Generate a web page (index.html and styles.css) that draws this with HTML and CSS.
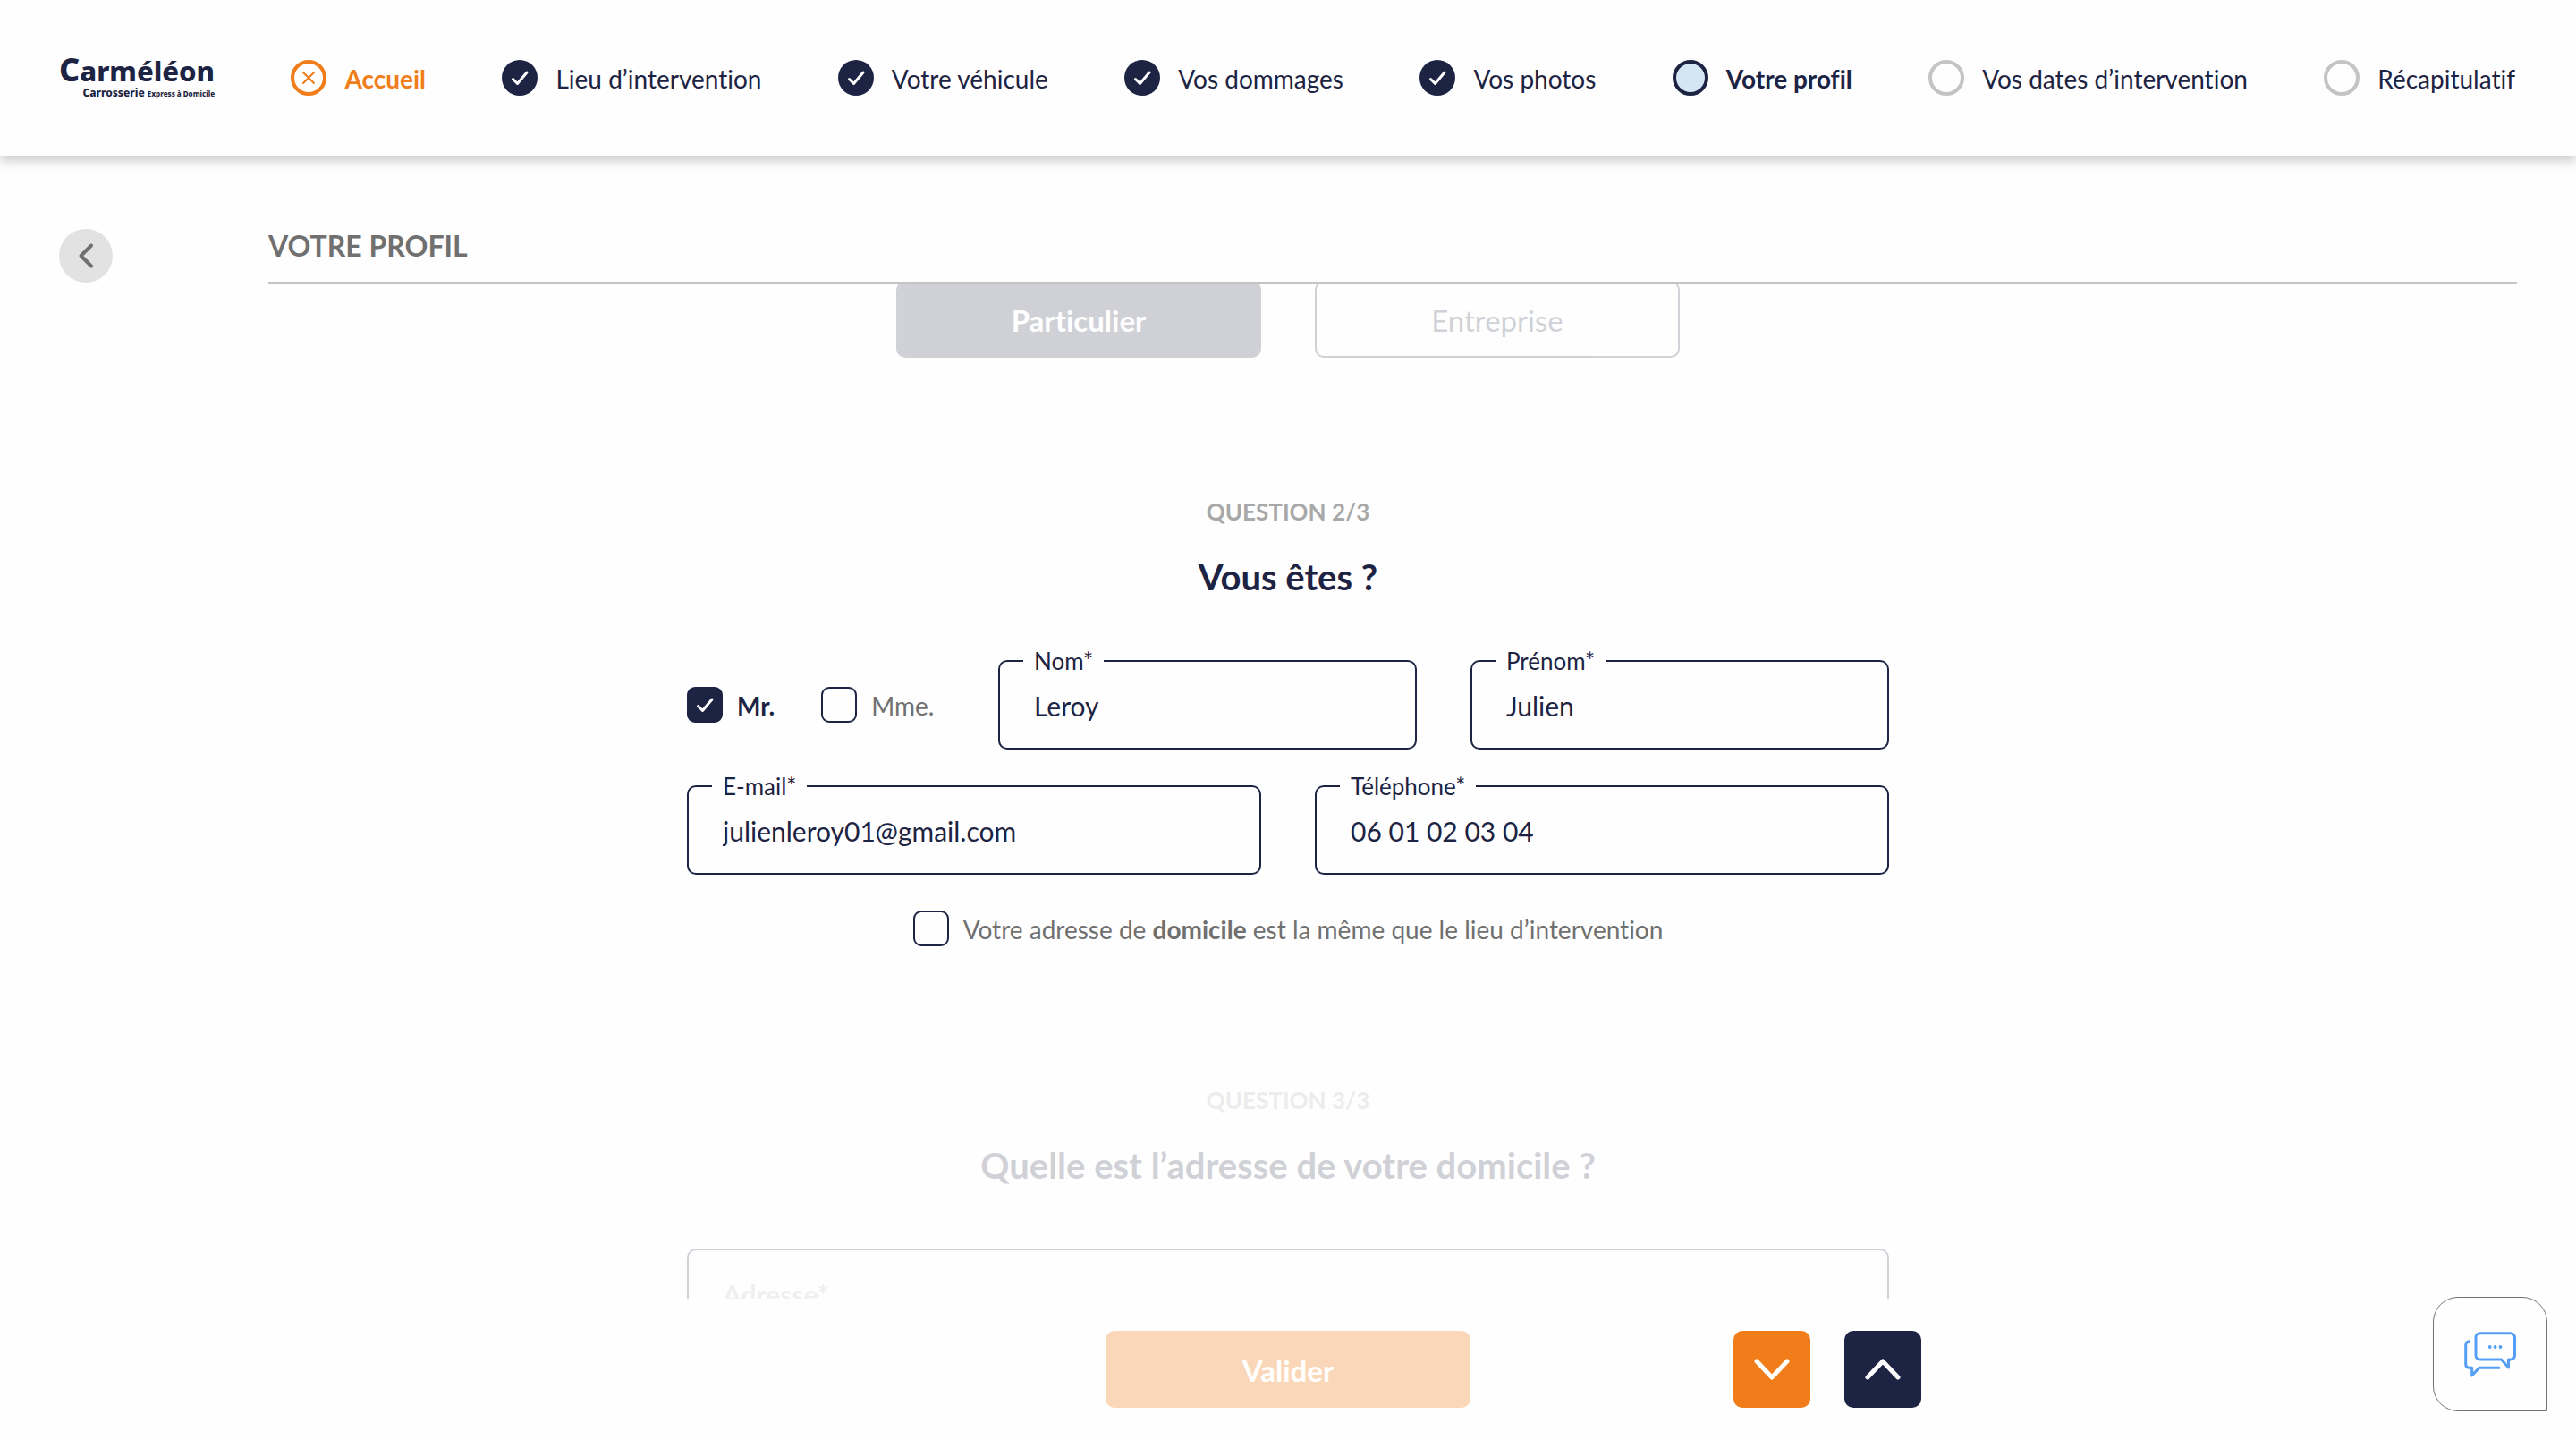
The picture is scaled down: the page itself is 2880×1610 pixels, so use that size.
FILE: index.html
```html
<!DOCTYPE html>
<html lang="fr">
<head>
<meta charset="utf-8">
<meta name="viewport" content="width=device-width, initial-scale=1">
<title>Carméléon – Votre profil</title>
<link rel="stylesheet" href="styles.css">
</head>
<body>
<header class="topbar">
  <div class="logo">
    <span class="logo-name"><span class="logo-initial">C</span>arméléon</span>
    <span class="logo-tagline">Carrosserie <small class="logo-small">Express à Domicile</small></span>
  </div>
  <a class="step step-home" href="#">
    <svg class="step-icon" viewBox="0 0 40 40"><circle cx="20" cy="20" r="18" fill="none" stroke="currentColor" stroke-width="4"/><path d="M14 14l12 12M26 14l-12 12" fill="none" stroke="currentColor" stroke-width="2" stroke-linecap="round"/></svg>
    <span class="step-label">Accueil</span>
  </a>
  <a class="step" href="#">
    <svg class="step-icon" viewBox="0 0 40 40"><circle cx="20" cy="20" r="20" fill="currentColor"/><path class="tick" d="M12.500 21.500l5 5L28 14"/></svg>
    <span class="step-label">Lieu d’intervention</span>
  </a>
  <a class="step" href="#">
    <svg class="step-icon" viewBox="0 0 40 40"><circle cx="20" cy="20" r="20" fill="currentColor"/><path class="tick" d="M12.500 21.500l5 5L28 14"/></svg>
    <span class="step-label">Votre véhicule</span>
  </a>
  <a class="step" href="#">
    <svg class="step-icon" viewBox="0 0 40 40"><circle cx="20" cy="20" r="20" fill="currentColor"/><path class="tick" d="M12.500 21.500l5 5L28 14"/></svg>
    <span class="step-label">Vos dommages</span>
  </a>
  <a class="step" href="#">
    <svg class="step-icon" viewBox="0 0 40 40"><circle cx="20" cy="20" r="20" fill="currentColor"/><path class="tick" d="M12.500 21.500l5 5L28 14"/></svg>
    <span class="step-label">Vos photos</span>
  </a>
  <a class="step step-current" href="#" aria-current="step">
    <svg class="step-icon" viewBox="0 0 40 40"><circle cx="20" cy="20" r="18" fill="#d4e6f4" stroke="currentColor" stroke-width="4"/></svg>
    <span class="step-label">Votre profil</span>
  </a>
  <a class="step" href="#">
    <svg class="step-icon" viewBox="0 0 40 40"><circle cx="20" cy="20" r="18" fill="none" stroke="#c4c4c4" stroke-width="4"/></svg>
    <span class="step-label">Vos dates d’intervention</span>
  </a>
  <a class="step" href="#">
    <svg class="step-icon" viewBox="0 0 40 40"><circle cx="20" cy="20" r="18" fill="none" stroke="#c4c4c4" stroke-width="4"/></svg>
    <span class="step-label">Récapitulatif</span>
  </a>
</header>

<div class="page-head">
  <button class="back" type="button" aria-label="Retour">
    <svg viewBox="0 0 60 60"><path d="M36 18.500L24.500 30 36 41.500" fill="none" stroke="currentColor" stroke-width="4" stroke-linecap="round" stroke-linejoin="round"/></svg>
  </button>
  <h1 class="page-title">VOTRE PROFIL</h1>
</div>

<main class="questions">
  <div class="choices faded">
    <button class="btn btn-dark" type="button">Particulier</button>
    <button class="btn btn-outline" type="button">Entreprise</button>
  </div>

  <section class="question">
    <p class="eyebrow">QUESTION 2/3</p>
    <h2 class="question-title">Vous êtes ?</h2>
    <form class="form">
      <div class="row row-name">
        <div class="civility">
          <label class="check"><span class="box"><input type="checkbox" checked><svg viewBox="0 0 40 40"><path class="tick" d="M12.500 21.500l5 5L28 14"/></svg></span><span class="check-label">Mr.</span></label>
          <label class="check"><span class="box"><input type="checkbox"><svg viewBox="0 0 40 40"><path class="tick" d="M12.500 21.500l5 5L28 14"/></svg></span><span class="check-label">Mme.</span></label>
        </div>
        <div class="field"><input id="nom" type="text" value="Leroy"><label for="nom">Nom*</label></div>
        <div class="field"><input id="prenom" type="text" value="Julien"><label for="prenom">Prénom*</label></div>
      </div>
      <div class="row row-contact">
        <div class="field"><input id="email" type="email" value="julienleroy01@gmail.com"><label for="email">E-mail*</label></div>
        <div class="field"><input id="tel" type="tel" value="06 01 02 03 04"><label for="tel">Téléphone*</label></div>
      </div>
      <label class="check same-address"><span class="box"><input type="checkbox"><svg viewBox="0 0 40 40"><path class="tick" d="M12.500 21.500l5 5L28 14"/></svg></span><span class="check-label">Votre adresse de <strong>domicile</strong> est la même que le lieu d’intervention</span></label>
    </form>
  </section>

  <section class="question faded">
    <p class="eyebrow">QUESTION 3/3</p>
    <h2 class="question-title">Quelle est l’adresse de votre domicile ?</h2>
    <form class="form">
      <div class="field"><input type="text" placeholder="Adresse*" aria-label="Adresse"></div>
    </form>
  </section>
</main>

<footer class="actions">
  <button class="btn btn-submit" type="button">Valider</button>
  <div class="arrows">
    <button class="arrow arrow-down" type="button" aria-label="Question suivante"><svg viewBox="0 0 86 86"><path d="M26 34l17 18 17-18"/></svg></button>
    <button class="arrow arrow-up" type="button" aria-label="Question précédente"><svg viewBox="0 0 86 86"><path d="M26 52l17-18 17 18"/></svg></button>
  </div>
</footer>

<button class="chat" type="button" aria-label="Discuter avec nous">
  <svg viewBox="0 0 58 51" fill="none" stroke="#559ff5" stroke-width="3" stroke-linecap="round" stroke-linejoin="round">
    <path d="M17.500 1.700H52a4.500 4.500 0 0 1 4.500 4.500V26.500A4.500 4.500 0 0 1 52 31H49.500V40L41.500 31H17.500A4.500 4.500 0 0 1 13 26.500V6.200A4.500 4.500 0 0 1 17.500 1.700z"/>
    <path d="M5.500 10.700C3 11 1.700 12.500 1.700 15V36C1.700 38.800 3.200 40.300 6 40.300H8.700V49L16.700 40.300H39"/>
    <g fill="#559ff5" stroke="none"><circle cx="28.700" cy="17" r="1.900"/><circle cx="34.600" cy="17" r="1.900"/><circle cx="40.500" cy="17" r="1.900"/></g>
  </svg>
</button>
</body>
</html>
```
FILE: styles.css
```css
:root {
  --navy: #1d2342;
  --orange: #f07d19;
  --grey: #707070;
  --line: #c4c4c4;
  --page: #fefefe;
}

* { box-sizing: border-box; }

body {
  margin: 0;
  height: 100vh;
  display: flex;
  flex-direction: column;
  overflow: hidden;
  background: var(--page);
  color: var(--navy);
  font: 28px/34px Lato, "Open Sans", sans-serif;
  font-variant-ligatures: none;
}

h1, h2, p { margin: 0; }
button, input { font: inherit; color: inherit; font-variant-ligatures: none; }
button { padding: 0; border: 0; cursor: pointer; }
svg { display: block; }

.tick {
  fill: none;
  stroke: #fff;
  stroke-width: 3;
  stroke-linecap: round;
  stroke-linejoin: round;
}

/* Top bar */
.topbar {
  flex: none;
  position: relative;
  z-index: 2;
  height: 174px;
  padding: 0 68px 0 66px;
  display: flex;
  align-items: center;
  justify-content: space-between;
  background: var(--page);
  box-shadow: 0 6px 12px rgba(0, 0, 0, 0.2);
}

.logo {
  display: flex;
  flex-direction: column;
  align-items: flex-end;
  font-family: "Noto Sans", sans-serif;
  font-weight: 800;
}
.logo-name { font-size: 31px; line-height: 34px; }
.logo-initial { font-size: 36px; }
.logo-tagline { font-size: 12px; line-height: 16px; }
.logo-small { font-size: 8px; }

.step {
  display: flex;
  align-items: center;
  gap: 20px;
  color: inherit;
  text-decoration: none;
  white-space: nowrap;
}
.step-icon { width: 40px; height: 40px; }
.step-label { padding-top: 2px; }
.step-home { color: var(--orange); font-weight: 700; }
.step-current { font-weight: 700; }

/* Page heading */
.page-head {
  flex: none;
  position: relative;
  z-index: 1;
  display: flex;
  align-items: flex-start;
  gap: 174px;
  padding: 81px 66px 0;
  background: var(--page);
}
.back {
  width: 60px;
  height: 60px;
  margin-top: 1px;
  border-radius: 50%;
  background: #e2e2e2;
  color: var(--grey);
}
.page-title {
  flex: 1;
  padding-bottom: 20px;
  border-bottom: 2px solid var(--line);
  color: var(--grey);
  font-size: 32px;
  line-height: 40px;
  font-weight: 700;
}

/* Scrolling list of questions, its first row tucked under the heading rule */
.questions {
  flex: 1;
  min-height: 0;
  margin-top: -3px;
  overflow: hidden;
}
.faded { opacity: 0.2; }

.choices {
  display: flex;
  justify-content: center;
  gap: 60px;
}
.btn {
  width: 408px;
  height: 86px;
  padding-top: 2px;
  border-radius: 10px;
  font-size: 33px;
  line-height: 40px;
}
.btn-dark { background: var(--navy); color: #fff; font-weight: 700; }
.btn-outline { border: 2px solid var(--navy); background: none; }

.question {
  max-width: 1344px;
  margin: 156px auto 0;
}
.eyebrow {
  color: #a8a8a8;
  font-size: 26px;
  line-height: 32px;
  font-weight: 700;
  text-align: center;
}
.question-title {
  margin: 33px 0 69px;
  font-size: 40px;
  line-height: 48px;
  font-weight: 700;
  text-align: center;
}

.form { display: grid; gap: 40px; }
.row { display: grid; gap: 60px; }
.row-name { grid-template-columns: 288px 1fr 1fr; }
.row-contact { grid-template-columns: 1fr 1fr; }

.civility { display: flex; align-items: center; gap: 52px; }
.check {
  display: flex;
  align-items: center;
  gap: 16px;
  color: var(--grey);
  white-space: nowrap;
}
.check-label { padding-top: 2px; }
.check:has(:checked) { color: var(--navy); font-weight: 700; }
.same-address { justify-self: center; }

.box { display: grid; width: 40px; height: 40px; }
.box > * { grid-area: 1 / 1; }
.box input {
  appearance: none;
  width: 40px;
  height: 40px;
  margin: 0;
  border: 2px solid var(--navy);
  border-radius: 9px;
}
.box input:checked { background: var(--navy); }
.box svg { pointer-events: none; z-index: 1; }
.box input:not(:checked) + svg { visibility: hidden; }

.field { position: relative; }
.field input {
  display: block;
  width: 100%;
  height: 100px;
  padding: 2px 38px 0;
  border: 2px solid var(--navy);
  border-radius: 10px;
  background: none;
  font-size: 30px;
}
.field label {
  position: absolute;
  top: -16px;
  left: 28px;
  padding: 0 12px;
  background: var(--page);
  font-size: 26px;
  line-height: 34px;
}
.field input::placeholder { color: #b8b8b8; font-weight: 700; opacity: 1; }

/* Bottom actions */
.actions {
  flex: none;
  display: grid;
  grid-template-columns: 1fr auto 1fr;
  padding: 36px 0;
}
.btn-submit {
  grid-column: 2;
  background: #fad7b8;
  color: #fff;
  font-weight: 700;
}
.arrows { display: flex; gap: 38px; padding-left: 294px; }
.arrow { width: 86px; height: 86px; border-radius: 10px; }
.arrow-down { background: var(--orange); }
.arrow-up { background: var(--navy); }
.arrow path {
  fill: none;
  stroke: #fff;
  stroke-width: 5;
  stroke-linecap: round;
  stroke-linejoin: round;
}

.chat {
  position: fixed;
  right: 32px;
  bottom: 32px;
  width: 128px;
  height: 128px;
  display: grid;
  place-items: center;
  border: 1px solid var(--grey);
  border-radius: 28px 28px 0 28px;
  background: var(--page);
}
.chat svg { width: 58px; height: 51px; }
```
